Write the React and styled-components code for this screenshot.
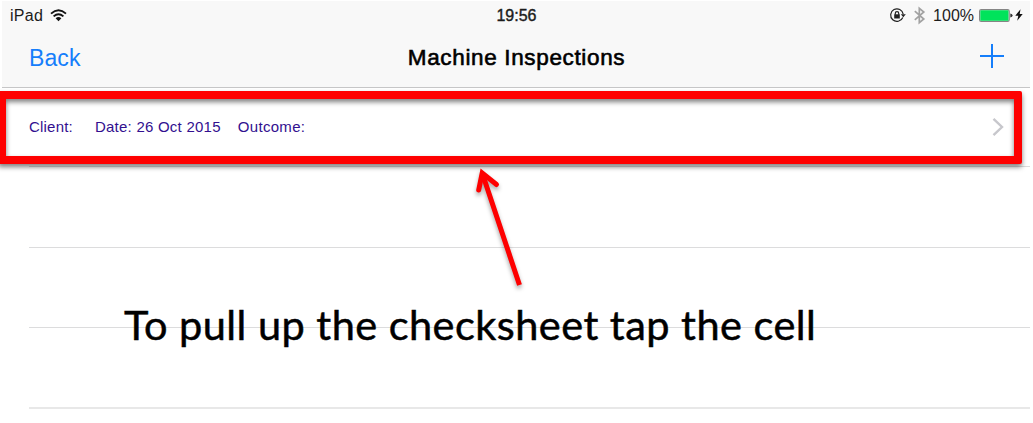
import React from "react";
import styled, { createGlobalStyle } from "styled-components";

const GlobalStyle = createGlobalStyle`
  * { box-sizing: border-box; }
  body { margin: 0; background: #fff; overflow: hidden; }
`;

const Page = styled.main`
  position: relative;
  width: 1033px;
  height: 423px;
  padding: 1px 3px 0 2px;
  overflow: hidden;
  background: #fff;
  font-family: "Liberation Sans", Arial, sans-serif;
`;

const Header = styled.header`
  height: 87px;
  background: #f8f8f8;
  border-bottom: 1px solid #c6c6c7;
`;

const Bar = styled.div`
  display: grid;
  grid-template-columns: 1fr auto 1fr;
  align-items: center;
  height: ${(p) => p.$height}px;
  padding: ${(p) => p.$padding};
`;

const Group = styled.div`
  display: flex;
  align-items: center;
  justify-content: ${(p) => (p.$end ? "flex-end" : "flex-start")};
`;

const StatusText = styled.span`
  font-size: 16px;
  line-height: 20px;
  margin-left: ${(p) => p.$gap || 0}px;
  padding-top: 1px;
  color: #1c1c1c;
  letter-spacing: ${(p) => p.$spacing || 0}px;
  -webkit-text-stroke: ${(p) => p.$stroke || 0}px #1c1c1c;
`;

const StatusIcon = styled.svg`
  display: block;
  flex: none;
  overflow: visible;
  margin-left: ${(p) => p.$gap || 0}px;
`;

const BackButton = styled.a`
  padding-top: 2px;
  font-size: 23px;
  line-height: 30px;
  letter-spacing: 0.1px;
  color: #157efb;
`;

const Title = styled.h1`
  margin: 0;
  padding-top: 2px;
  font-size: 22.5px;
  line-height: 30px;
  font-weight: 400;
  letter-spacing: 0.65px;
  color: #000;
  -webkit-text-stroke: 0.6px #000;
`;

const AddIcon = styled.svg`
  display: block;
  margin-bottom: 2px;
`;

const List = styled.section`
  padding-left: 27px;
`;

const Row = styled.div`
  display: flex;
  align-items: center;
  height: ${(p) => p.$height || 80}px;
  padding-right: 26px;
  border-bottom: ${(p) => p.$line || 1}px solid ${(p) => p.$color || "#dcdcdd"};
`;

const Field = styled.span`
  font-size: 15px;
  line-height: 20px;
  letter-spacing: ${(p) => p.$spacing || 0.2}px;
  margin-right: ${(p) => p.$gap || 0}px;
  color: #32108f;
  white-space: nowrap;
`;

const Chevron = styled.svg`
  display: block;
  margin-left: auto;
`;

const Highlight = styled.div`
  position: absolute;
  left: -2px;
  top: 91px;
  width: 1024px;
  height: 73px;
  border: 8px solid #fe0000;
  border-radius: 2px;
  filter: drop-shadow(0 3.5px 2.5px rgba(0, 0, 0, 0.5));
`;

const Arrow = styled.svg`
  position: absolute;
  left: 470px;
  top: 160px;
  overflow: visible;
  filter: drop-shadow(0 3.5px 2px rgba(0, 0, 0, 0.35));
`;

const Caption = styled.p`
  position: absolute;
  left: 124px;
  top: 299px;
  margin: 0;
  font-family: Lato, "Open Sans", sans-serif;
  font-size: 41.5px;
  line-height: 50px;
  letter-spacing: 0.46px;
  color: #000;
  -webkit-text-stroke: 0.5px #000;
  white-space: nowrap;
`;

export default function App() {
  return (
    <>
      <GlobalStyle />
      <Page>
        <Header>
          <Bar $height={28} $padding="0 7px 0 8px">
            <Group>
              <StatusText $spacing={0.25}>iPad</StatusText>
              <StatusIcon $gap={7} width="17" height="13" viewBox="0 0 17 13" fill="none" stroke="#111" strokeWidth="1.9">
                <path d="M1 4.6Q8.5-2 16 4.6M3.6 7.4Q8.5 3.1 13.4 7.4" />
                <path d="M8.5 12.2 5.6 9.2Q8.5 7 11.4 9.2Z" fill="#111" stroke="none" />
              </StatusIcon>
            </Group>
            <StatusText $stroke={0.4}>19:56</StatusText>
            <Group $end>
              <StatusIcon width="16" height="14" viewBox="0 0 16 14" fill="none" stroke="#222" strokeWidth="1.2">
                <path d="M12.8 9.5A6.3 6.3 0 1 1 13.2 6.2" />
                <path d="M10.8 6.3h5L13.3 9.3Z" fill="#222" stroke="none" />
                <path d="M5.3 6.8V5.3a1.7 1.7 0 0 1 3.4 0V6.8" />
                <rect x="4.2" y="6.3" width="5.6" height="4.2" fill="#222" stroke="none" />
              </StatusIcon>
              <StatusIcon $gap={8} width="11" height="17" viewBox="0 0 11 17" fill="none" stroke="#a2a2a2" strokeWidth="1.7">
                <path d="M.8 4.2 9.8 12 5.3 15.7V1.3L9.8 5 .8 12.8" />
              </StatusIcon>
              <StatusText $gap={8}>100%</StatusText>
              <StatusIcon $gap={5} width="34" height="13" viewBox="0 0 34 13">
                <rect x=".6" y=".6" width="29.6" height="11.8" rx="1.6" fill="#f8f8f8" stroke="#858585" strokeWidth="1.2" />
                <rect x="1.3" y="1.3" width="28.2" height="10.4" rx=".6" fill="#00e35b" />
                <path d="M31.3 4.5Q33.6 4.8 33.6 6.5T31.3 8.5Z" fill="#333" />
              </StatusIcon>
              <StatusIcon $gap={2} width="8" height="12" viewBox="0 0 8 12">
                <path d="M5.5.2.3 6.7H3.3L2.2 11.8 7.7 5H4.7Z" fill="#111" />
              </StatusIcon>
            </Group>
          </Bar>
          <Bar $height={58} $padding="0 26px 2px 27px">
            <Group>
              <BackButton>Back</BackButton>
            </Group>
            <Title>Machine Inspections</Title>
            <Group $end>
              <AddIcon width="24" height="24" viewBox="0 0 24 24" stroke="#157efb" strokeWidth="2">
                <path d="M0 12H24M12 0V24" />
              </AddIcon>
            </Group>
          </Bar>
        </Header>
        <List>
          <Row $height={79}>
            <Field $gap={22}>Client:</Field>
            <Field $gap={17} $spacing={0.24}>Date: 26 Oct 2015</Field>
            <Field $spacing={0.32}>Outcome:</Field>
            <Chevron width="12" height="20" viewBox="0 0 12 20" fill="none" stroke="#c7c7cc" strokeWidth="2.4">
              <path d="M1.5 1.8 10 10 1.5 18.2" />
            </Chevron>
          </Row>
          <Row $height={81} />
          <Row />
          <Row $height={81} $line={2} $color="#e8e8e8" />
        </List>
        <Highlight />
        <Arrow width="60" height="130" viewBox="0 0 60 130" fill="none" stroke="#fe0000" strokeWidth="5">
          <path d="M49.5 125 12.5 14" />
          <path d="M8.7 30 12.2 13 26.5 24.5" strokeLinecap="round" />
        </Arrow>
        <Caption>To pull up the checksheet tap the cell</Caption>
      </Page>
    </>
  );
}
